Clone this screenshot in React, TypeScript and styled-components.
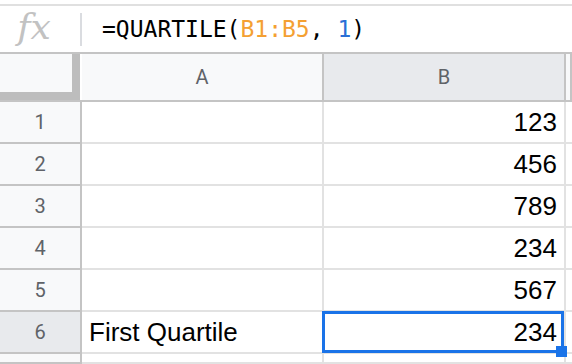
import React from "react";
import styled, { createGlobalStyle } from "styled-components";

const GlobalStyle = createGlobalStyle`
  body {
    margin: 0;
    background: #ffffff;
  }
`;

const Sheet = styled.div`
  width: 572px;
  height: 364px;
  overflow: hidden;
  background: #ffffff;
`;

const TopStrip = styled.div`
  height: 4px;
  border-bottom: 2px solid #e0e0e0;
`;

const FormulaBar = styled.div`
  display: flex;
  align-items: center;
  height: 46px;
  border-bottom: 2px solid #c4c4c4;
`;

const FxBox = styled.div`
  width: 80px;
  display: flex;
  justify-content: center;
  font-family: "DejaVu Serif", "Liberation Serif", serif;
  font-style: italic;
  font-size: 36px;
  line-height: 1;
  color: #c2c2c2;
  padding-bottom: 4px;
  padding-right: 12px;
  box-sizing: border-box;
`;

const Divider = styled.div`
  width: 2px;
  height: 33px;
  background: #dadce0;
`;

const FormulaText = styled.div`
  margin-left: 20px;
  font-family: "DejaVu Sans Mono", "Liberation Mono", monospace;
  font-size: 23px;
  color: #000000;
  white-space: pre;
`;

const Token = styled.span<{ $kind: "range" | "number" }>`
  color: ${(p) => (p.$kind === "range" ? "#f4a032" : "#2a6fd6")};
`;

const Grid = styled.div`
  position: relative;
  display: grid;
  grid-template-columns: 82px 242px 242px 6px;
  grid-template-rows: 48px repeat(6, 42px) 10px;
`;

const Corner = styled.div`
  padding-right: 2px;
  border-bottom: 2px solid #c4c4c4;
  background: #ffffff;
`;

const FreezeBox = styled.div`
  height: 100%;
  box-sizing: border-box;
  background: #f8f9fa;
  border-right: 8px solid #bdbdbd;
  border-bottom: 8px solid #bdbdbd;
`;

const HeaderCell = styled.div<{ $selected?: boolean }>`
  display: flex;
  align-items: center;
  justify-content: center;
  background: ${(p) => (p.$selected ? "#e8eaed" : "#f8f9fa")};
  border-right: 2px solid #c4c4c4;
  border-bottom: 2px solid #c4c4c4;
  font-family: Roboto, "Liberation Sans", sans-serif;
  font-size: 20px;
  color: #5f6368;
`;

const Cell = styled.div<{ $align?: "left" | "right" }>`
  display: flex;
  align-items: center;
  justify-content: ${(p) => (p.$align === "right" ? "flex-end" : "flex-start")};
  padding: 0 7px;
  border-right: 2px solid #e2e2e2;
  border-bottom: 2px solid #e2e2e2;
  font-family: "Liberation Sans", Arial, sans-serif;
  font-size: 26px;
  color: #000000;
  white-space: nowrap;
`;

const Selection = styled.div`
  position: absolute;
  left: 322px;
  top: 257px;
  width: 242px;
  height: 42px;
  box-sizing: border-box;
  border: 3px solid #1a73e8;
`;

const FillHandle = styled.div`
  position: absolute;
  right: -6px;
  bottom: -7px;
  width: 11px;
  height: 11px;
  background: #1a73e8;
`;

const rows: { label: string; b: string }[] = [
  { label: "", b: "123" },
  { label: "", b: "456" },
  { label: "", b: "789" },
  { label: "", b: "234" },
  { label: "", b: "567" },
  { label: "First Quartile", b: "234" },
];

export default function App() {
  return (
    <Sheet>
      <GlobalStyle />
      <TopStrip />
      <FormulaBar>
        <FxBox>fx</FxBox>
        <Divider />
        <FormulaText>
          =QUARTILE(<Token $kind="range">B1:B5</Token>, <Token $kind="number">1</Token>)
        </FormulaText>
      </FormulaBar>
      <Grid>
        <Corner>
          <FreezeBox />
        </Corner>
        <HeaderCell>A</HeaderCell>
        <HeaderCell $selected>B</HeaderCell>
        <HeaderCell />
        {rows.map((r, i) => (
          <React.Fragment key={i}>
            <HeaderCell $selected={i === 5}>{i + 1}</HeaderCell>
            <Cell>{r.label}</Cell>
            <Cell $align="right">{r.b}</Cell>
            <Cell />
          </React.Fragment>
        ))}
        <HeaderCell />
        <Cell />
        <Cell />
        <Cell />
        <Selection>
          <FillHandle />
        </Selection>
      </Grid>
    </Sheet>
  );
}
